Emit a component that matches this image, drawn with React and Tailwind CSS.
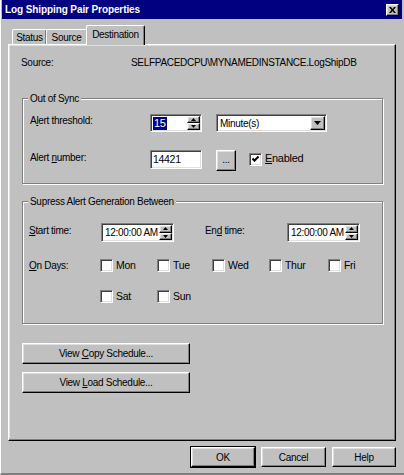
import React from "react";

const raised =
  "border border-t-white border-l-white border-r-black border-b-black shadow-[inset_-1px_-1px_0_#808080,inset_1px_1px_0_#dfdfdf]";
const sunken =
  "border border-t-[#808080] border-l-[#808080] border-r-white border-b-white shadow-[inset_1px_1px_0_#404040,inset_-1px_-1px_0_#dfdfdf]";
const group =
  "relative border border-[#808080] shadow-[inset_1px_1px_0_white,1px_1px_0_white]";

function U({ children }) {
  return <span className="underline underline-offset-[1px]">{children}</span>;
}

function SpinBtns() {
  return (
    <div className="flex flex-col w-[13px] h-full shrink-0">
      <div className={"flex-1 flex items-center justify-center bg-[#c0c0c0] " + raised}>
        <svg width="5" height="3" viewBox="0 0 5 3">
          <path d="M2.5 0 L5 3 L0 3 Z" fill="black" />
        </svg>
      </div>
      <div className={"flex-1 flex items-center justify-center bg-[#c0c0c0] " + raised}>
        <svg width="5" height="3" viewBox="0 0 5 3">
          <path d="M0 0 L5 0 L2.5 3 Z" fill="black" />
        </svg>
      </div>
    </div>
  );
}

function Check({ checked }) {
  return (
    <div className={"w-[13px] h-[13px] shrink-0 bg-white flex items-center justify-center " + sunken}>
      {checked && (
        <svg width="7" height="7" viewBox="0 0 7 7">
          <polyline points="0.5,2.5 2.5,4.5 6.5,0.5" fill="none" stroke="black" strokeWidth="2" />
        </svg>
      )}
    </div>
  );
}

function Day({ label, w }) {
  return (
    <div className={"flex items-start " + w}>
      <Check />
      <span className="ml-[3px] text-[10.5px]">{label}</span>
    </div>
  );
}

function TimeBox() {
  return (
    <div className={"w-[73px] h-[19px] bg-white flex items-stretch p-[1px] " + sunken}>
      <span className="flex-1 pl-[2px] flex items-center whitespace-nowrap">12:00:00 AM</span>
      <SpinBtns />
    </div>
  );
}

function Btn({ className, children }) {
  return (
    <div className={"flex items-center justify-center bg-[#c0c0c0] " + raised + " " + className}>
      {children}
    </div>
  );
}

export default function App() {
  return (
    <div className="w-[404px] h-[475px] bg-[#c0c0c0] flex flex-col font-['Liberation_Sans',Arial,sans-serif] text-[10px] tracking-[-0.3px] leading-[13px] text-black border-l border-l-white border-b-2 border-b-[#808080] overflow-hidden">
      {/* title bar */}
      <div className="h-[19px] ml-[1px] mr-[2px] bg-[#000080] flex items-center justify-between pl-[3px] pr-[3px]">
        <span className="text-white font-bold text-[10px] tracking-[-0.1px]">Log Shipping Pair Properties</span>
        <div className={"w-[13px] h-[12px] bg-[#c0c0c0] flex items-center justify-center " + raised}>
          <svg width="7" height="6" viewBox="0 0 7 6">
            <path d="M0 0 L2 0 L3.5 2 L5 0 L7 0 L4.5 3 L7 6 L5 6 L3.5 4 L2 6 L0 6 L2.5 3 Z" fill="black" />
          </svg>
        </div>
      </div>

      {/* tabs */}
      <div className="flex items-end ml-[11px] mt-[6px] h-[19px] relative z-10">
        <div className="h-[15px] w-[34px] border-t border-l border-t-white border-l-white rounded-tl-[2px] shadow-[inset_-1px_0_0_#808080] flex items-center justify-center">
          Status
        </div>
        <div className="h-[15px] w-[40px] border-t border-l border-t-white border-l-white rounded-tl-[2px] flex items-center justify-center">
          Source
        </div>
        <div className="h-[20px] w-[59px] -mb-[1px] bg-[#c0c0c0] border-t border-l border-r border-t-white border-l-white border-r-black rounded-t-[2px] shadow-[inset_-1px_0_0_#808080] flex items-start justify-center pt-[2px]">
          Destination
        </div>
      </div>

      {/* panel */}
      <div className={"ml-[7px] w-[388px] h-[397px] flex flex-col pl-[12px] pt-[11px] " + raised}>
        <div className="flex">
          <span className="w-[110px]">Source:</span>
          <span>SELFPACEDCPU\MYNAMEDINSTANCE.LogShipDB</span>
        </div>

        {/* Out of Sync */}
        <div className={"ml-[1px] mt-[29px] w-[361px] h-[86px] pl-[7px] pt-[15px] flex flex-col " + group}>
          <span className="absolute left-[5px] -top-[7px] px-[2px] bg-[#c0c0c0]">Out of Sync</span>
          <div className="flex items-start h-[18px]">
            <span className="w-[120px]">A<U>l</U>ert threshold:</span>
            <div className={"w-[52px] h-[18px] bg-white flex items-stretch p-[1px] " + sunken}>
              <span className="flex-1 pl-[1px] flex items-center">
                <span className="bg-[#000080] text-white leading-[13px] px-[1px] text-[11px]">15</span>
              </span>
              <SpinBtns />
            </div>
            <div className={"ml-[14px] w-[111px] h-[18px] bg-white flex items-stretch p-[1px] " + sunken}>
              <span className="flex-1 pl-[2px] flex items-center">Minute(s)</span>
              <div className={"w-[15px] flex items-center justify-center bg-[#c0c0c0] " + raised}>
                <svg width="7" height="4" viewBox="0 0 7 4">
                  <path d="M0 0 L7 0 L3.5 4 Z" fill="black" />
                </svg>
              </div>
            </div>
          </div>
          <div className="flex items-start mt-[18px] h-[21px]">
            <span className="w-[120px] mt-[1px]">Alert <U>n</U>umber:</span>
            <div className={"w-[52px] h-[19px] bg-white flex items-center pl-[2px] text-[10.5px] " + sunken}>14421</div>
            <Btn className="ml-[14px] w-[20px] h-[21px] pb-[3px]">...</Btn>
            <div className="ml-[13px] mt-[3px]">
              <Check checked />
            </div>
            <span className="ml-[3px] mt-[2px] text-[11px]">
              <U>E</U>nabled
            </span>
          </div>
        </div>

        {/* Suppress */}
        <div className={"ml-[1px] mt-[17px] w-[361px] h-[123px] pl-[6px] pt-[21px] flex flex-col " + group}>
          <span className="absolute left-[5px] -top-[7px] px-[2px] bg-[#c0c0c0]">Supress Alert Generation Between</span>
          <div className="flex items-start">
            <span className="w-[72px] mt-[1px]">
              <U>S</U>tart time:
            </span>
            <TimeBox />
            <span className="ml-[31px] w-[82px] mt-[1px]">
              En<U>d</U> time:
            </span>
            <TimeBox />
          </div>
          <div className="flex items-start mt-[17px]">
            <span className="w-[71px]">
              <U>O</U>n Days:
            </span>
            <Day label="Mon" w="w-[57px]" />
            <Day label="Tue" w="w-[55px]" />
            <Day label="Wed" w="w-[57px]" />
            <Day label="Thur" w="w-[59px]" />
            <Day label="Fri" w="w-[40px]" />
          </div>
          <div className="flex items-start mt-[18px] ml-[71px]">
            <Day label="Sat" w="w-[57px]" />
            <Day label="Sun" w="w-[55px]" />
          </div>
        </div>

        <Btn className="ml-[1px] mt-[19px] w-[168px] h-[21px]">
          <span>
            View <U>C</U>opy Schedule...
          </span>
        </Btn>
        <Btn className="ml-[1px] mt-[8px] w-[168px] h-[21px]">
          <span>
            View <U>L</U>oad Schedule...
          </span>
        </Btn>
      </div>

      {/* bottom buttons */}
      <div className="flex justify-end gap-[6px] mt-[6px] pr-[8px]">
        <Btn className="w-[64px] h-[20px] outline outline-1 outline-black">OK</Btn>
        <Btn className="w-[65px] h-[20px]">Cancel</Btn>
        <Btn className="w-[64px] h-[20px]">Help</Btn>
      </div>
    </div>
  );
}
